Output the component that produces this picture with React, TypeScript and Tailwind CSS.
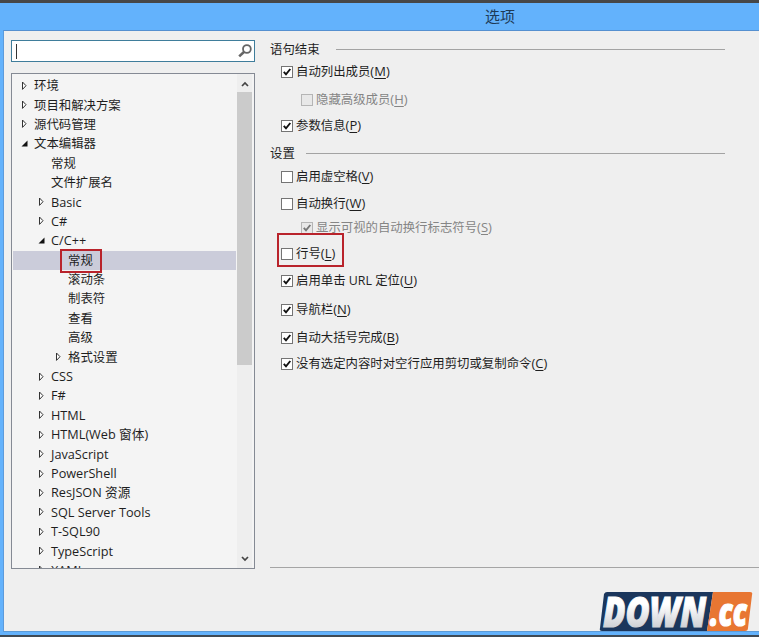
import clsx from "clsx";

interface TreeItem {
  label: string;
  level: number;
  state?: "open" | "closed";
  selected?: boolean;
}

interface OptionProps {
  label: string;
  hotkey: string;
  className: string;
  checked?: boolean;
  disabled?: boolean;
  highlighted?: boolean;
}

const treeItems: TreeItem[] = [
  { label: "环境", level: 0, state: "closed" },
  { label: "项目和解决方案", level: 0, state: "closed" },
  { label: "源代码管理", level: 0, state: "closed" },
  { label: "文本编辑器", level: 0, state: "open" },
  { label: "常规", level: 1 },
  { label: "文件扩展名", level: 1 },
  { label: "Basic", level: 1, state: "closed" },
  { label: "C#", level: 1, state: "closed" },
  { label: "C/C++", level: 1, state: "open" },
  { label: "常规", level: 2, selected: true },
  { label: "滚动条", level: 2 },
  { label: "制表符", level: 2 },
  { label: "查看", level: 2 },
  { label: "高级", level: 2 },
  { label: "格式设置", level: 2, state: "closed" },
  { label: "CSS", level: 1, state: "closed" },
  { label: "F#", level: 1, state: "closed" },
  { label: "HTML", level: 1, state: "closed" },
  { label: "HTML(Web 窗体)", level: 1, state: "closed" },
  { label: "JavaScript", level: 1, state: "closed" },
  { label: "PowerShell", level: 1, state: "closed" },
  { label: "ResJSON 资源", level: 1, state: "closed" },
  { label: "SQL Server Tools", level: 1, state: "closed" },
  { label: "T-SQL90", level: 1, state: "closed" },
  { label: "TypeScript", level: 1, state: "closed" },
  { label: "XAML", level: 1, state: "closed" },
];

const indents = ["pl-[8px]", "pl-[25px]", "pl-[42px]"];

export default function App() {
  return (
    <div className="flex h-[637px] w-[759px] flex-col overflow-hidden border-t-[3px] border-b-2 border-t-[#474747] border-b-[#3f4a55] bg-[#63b2fc] font-['Open_Sans','Noto_Sans_CJK_SC',sans-serif] text-[12.4px] text-[#1e1e1e]">
      {/* Title bar */}
      <header className="flex h-[27px] shrink-0 items-center pl-[485px] text-[15px] text-[#1d3a57]">
        选项
      </header>

      {/* Dialog body */}
      <main className="mb-[3px] ml-[3px] flex min-h-0 flex-1 border-y border-l border-t-[#5590d0] border-b-[#5c9bd8] border-l-[#5c9bdc] bg-[#efefef] pt-[9px] pl-[7px]">
        <aside className="flex w-[244px] shrink-0 flex-col">
          <SearchBox />
          <Tree />
        </aside>
        <Options />
      </main>
    </div>
  );
}

function SearchBox() {
  return (
    <div className="flex h-[22px] shrink-0 items-center justify-between border border-[#3f7d9b] bg-white pr-[2px] pl-[4px]">
      <div className="h-[15px] w-px bg-[#333]" />
      <svg className="h-[14px] w-[14px]" viewBox="0 0 14 14" fill="none">
        <circle cx="8.9" cy="5" r="3.9" stroke="#666" strokeWidth="1.8" />
        <path d="M6.2 7.8 1.2 12.4" stroke="#666" strokeWidth="2.6" />
      </svg>
    </div>
  );
}

function Tree() {
  return (
    <div className="mt-[11px] flex h-[496px] border border-[#858a94] bg-[#f4f4f4]">
      <div className="flex-1 overflow-hidden pt-[2px] pl-px">
        {treeItems.map((item, i) => (
          <TreeRow key={i} {...item} />
        ))}
      </div>

      {/* Scrollbar */}
      <div className="mr-[2px] ml-px flex w-[15px] flex-col bg-[#eee]">
        <div className="flex h-[18px] items-center justify-center pt-px">
          <svg className="h-[6px] w-[8px]" viewBox="0 0 8 6">
            <path d="M1 5 4 2l3 3" fill="none" stroke="#444" strokeWidth="1.7" />
          </svg>
        </div>
        <div className="h-[273px] bg-[#cbcbcb]" />
        <div className="flex flex-1 items-end justify-center pb-[6px]">
          <svg className="h-[6px] w-[8px]" viewBox="0 0 8 6">
            <path d="M1 1l3 3 3-3" fill="none" stroke="#444" strokeWidth="1.7" />
          </svg>
        </div>
      </div>
    </div>
  );
}

function TreeRow({ label, level, state, selected }: TreeItem) {
  // Latin names are set slightly larger than the Chinese ones
  const isLatin = /^[A-Z]/.test(label);

  return (
    <div
      className={clsx(
        "flex h-[19.4px] items-center",
        indents[level],
        selected && "bg-[#cbccda]"
      )}
    >
      <div className="w-[13px]">
        {state === "closed" && (
          <svg className="h-[10px] w-[7px]" viewBox="0 0 7 10">
            <path d="M1.5 1v7.4L5 4.7z" fill="#fff" stroke="#333" />
          </svg>
        )}
        {state === "open" && (
          <svg className="h-[10px] w-[7px]" viewBox="0 0 7 10">
            <path d="M6.5 1.5v6h-6z" fill="#111" />
          </svg>
        )}
      </div>
      <div
        className={clsx(
          "relative leading-[19px] whitespace-nowrap",
          isLatin && "text-[12.7px]"
        )}
      >
        {label}
        {selected && (
          <div className="absolute -top-[2px] -left-[8px] h-[24px] w-[42px] border-2 border-[#b9232b]" />
        )}
      </div>
    </div>
  );
}

function Options() {
  return (
    <section className="ml-[15px] flex flex-1 flex-col">
      <div className="h-[528px] shrink-0 border-b border-[#a5a5a5]">
        <Heading title="语句结束" className="gap-[16px]" />
        <Option className="mt-[2px]" label="自动列出成员" hotkey="M" checked />
        <Option className="mt-[8px] ml-[20px]" label="隐藏高级成员" hotkey="H" disabled />
        <Option className="mt-[6px]" label="参数信息" hotkey="P" checked />
        <div className="h-[8px]" />
        <Heading title="设置" className="gap-[11px]" />
        <Option className="mt-[3px]" label="启用虚空格" hotkey="V" />
        <Option className="mt-[7px]" label="自动换行" hotkey="W" />
        <Option className="mt-[4px] ml-[20px]" label="显示可视的自动换行标志符号" hotkey="S" checked disabled />
        <Option className="mt-[6px]" label="行号" hotkey="L" highlighted />
        <Option className="mt-[7px]" label="启用单击 URL 定位" hotkey="U" checked />
        <Option className="mt-[9px]" label="导航栏" hotkey="N" checked />
        <Option className="mt-[8px]" label="自动大括号完成" hotkey="B" checked />
        <Option className="mt-[6px]" label="没有选定内容时对空行应用剪切或复制命令" hotkey="C" checked />
      </div>
      <div className="mt-[24px] ml-[329px]">
        <Logo />
      </div>
    </section>
  );
}

function Heading({ title, className }: { title: string; className: string }) {
  return (
    <div className={clsx("mr-[34px] flex h-[20px] items-center", className)}>
      <span>{title}</span>
      <div className="mb-px h-px flex-1 bg-[#a3a3a3]" />
    </div>
  );
}

function Option({ label, hotkey, className, checked, disabled, highlighted }: OptionProps) {
  return (
    <div className={clsx("flex h-[20px]", className)}>
      <div className={clsx("relative ml-[11px] flex items-center", disabled && "text-[#858585]")}>
        <div
          className={clsx(
            "mr-[3px] h-[12px] w-[12px] border",
            disabled ? "border-[#b5b5b5] bg-[#e8e8e8]" : "border-[#747474] bg-white"
          )}
        >
          {checked && (
            <svg className="h-[10px] w-[10px]" viewBox="0 0 10 10">
              <path
                d="M1.8 4.8 4 7.3 8.3 2"
                fill="none"
                stroke={disabled ? "#777" : "#111"}
                strokeWidth="1.9"
              />
            </svg>
          )}
        </div>
        <span className="whitespace-nowrap">
          {label}
          <span className="text-[13px]">
            (<span className="underline underline-offset-2">{hotkey}</span>)
          </span>
        </span>
        {highlighted && (
          <div className="absolute -top-[11px] -left-[4px] h-[34px] w-[67px] border-2 border-[#b9232b]" />
        )}
      </div>
    </div>
  );
}

function Logo() {
  return (
    <svg className="h-[39px] w-[156px]" viewBox="0 0 156 39">
      <defs>
        <linearGradient id="silver" x1="0" y1="0" x2="0" y2="1">
          <stop offset="0.4" stopColor="#fff" />
          <stop offset="0.85" stopColor="#c9cbd0" />
        </linearGradient>
      </defs>
      <path d="M8 0H114L108 39H3Q0 39 1 36L5 2Q6 0 8 0z" fill="#1b365c" />
      <path d="M114 0H151Q154 0 153 3L149 36Q149 39 146 39H108z" fill="#e87632" />
      <g fontFamily="'Open Sans', sans-serif" fontWeight="800" fontStyle="italic">
        <text x="4" y="34.5" fontSize="42" textLength="103" lengthAdjust="spacingAndGlyphs" fill="url(#silver)" stroke="url(#silver)" strokeWidth="1.2">
          DOWN
        </text>
        <text x="111" y="34" fontSize="39" textLength="37" lengthAdjust="spacingAndGlyphs" fill="#fff" stroke="#fff" strokeWidth="1.2">
          .cc
        </text>
      </g>
    </svg>
  );
}
